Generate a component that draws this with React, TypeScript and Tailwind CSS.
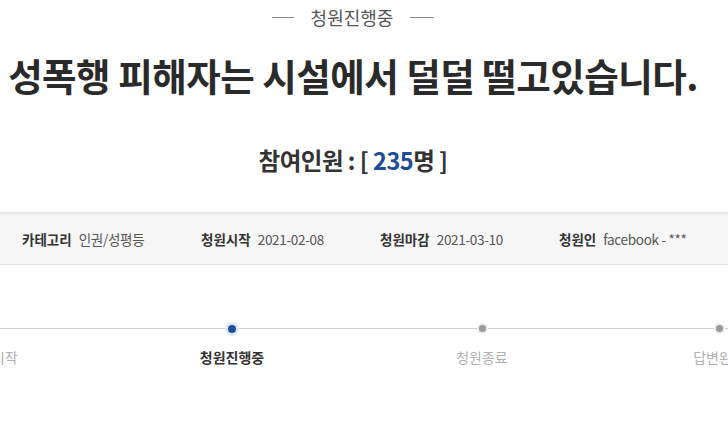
import React from 'react';

const steps = [
  { label: '청원시작', w: 'w-[240px]', state: 'done' },
  { label: '청원진행중', w: 'w-[240px]', state: 'active' },
  { label: '청원종료', w: 'w-[260px]', state: 'todo' },
  { label: '답변완료', w: 'w-[214px]', state: 'todo' },
];

const info = [
  { label: '카테고리', value: '인권/성평등' },
  { label: '청원시작', value: '2021-02-08' },
  { label: '청원마감', value: '2021-03-10' },
  { label: '청원인', value: 'facebook - ***' },
];

export default function App() {
  return (
    <div
      className="w-[728px] h-[422px] overflow-hidden bg-white"
      style={{ fontFamily: '"Noto Sans CJK KR", "Noto Sans", sans-serif' }}
    >
      <div className="pr-[22px]">
        {/* status tag */}
        <div className="pt-[5px] flex items-center justify-center gap-[17px] text-[#555]">
          <span className="w-[22px] h-px bg-[#888]" />
          <span className="text-[18px] leading-[24px]">청원진행중</span>
          <span className="w-[24px] h-px bg-[#888]" />
        </div>

        {/* title */}
        <h1 className="mt-[21px] text-center text-[37.5px] leading-[50px] font-bold text-[#2a2a2a] tracking-[-0.5px] whitespace-nowrap">
          성폭행 피해자는 시설에서 덜덜 떨고있습니다.
        </h1>

        {/* participants */}
        <div className="mt-[45px] text-center text-[23.5px] leading-[30px] font-semibold text-[#333] tracking-[-0.5px]">
          참여인원 : [ <span className="text-[#1d4b97]">235</span>명 ]
        </div>
      </div>

      {/* info bar */}
      <div className="mt-[37px] h-[53px] bg-[#f6f6f6] border-t-2 border-t-[#e8e8e8] border-b border-b-[#e2e2e2] flex items-center pl-[22px]">
        {info.map((item) => (
          <div key={item.label} className="w-[179px] shrink-0 flex items-center gap-[7px] whitespace-nowrap">
            <span className="text-[13.5px] font-bold text-[#333]">{item.label}</span>
            <span className="text-[13.5px] text-[#555] tracking-[-0.3px]">{item.value}</span>
          </div>
        ))}
      </div>

      {/* progress */}
      <div className="relative mt-[58px]">
        <div className="absolute left-0 right-0 top-[5px] h-px bg-[#cfcfcf]" />
        <div className="relative flex ml-[-128px]">
          {steps.map((s) => (
            <div key={s.label} className={`${s.w} shrink-0 flex flex-col items-center`}>
              <div className="h-[11px] flex items-center justify-center">
                {s.state === 'active' ? (
                  <span className="w-[8px] h-[8px] rounded-full bg-[#1d4f9c] ring-[3px] ring-[#dfe8f5]" />
                ) : s.state === 'todo' ? (
                  <span className="w-[7px] h-[7px] rounded-full bg-[#9a9a9a] ring-2 ring-[#ececec]" />
                ) : (
                  <span className="w-[7px] h-[7px]" />
                )}
              </div>
              <span
                className={`mt-[13px] text-[14px] leading-[20px] whitespace-nowrap ${
                  s.state === 'active' ? 'font-bold text-[#333]' : 'text-[#b0b0b0]'
                }`}
              >
                {s.label}
              </span>
            </div>
          ))}
        </div>
      </div>
    </div>
  );
}
